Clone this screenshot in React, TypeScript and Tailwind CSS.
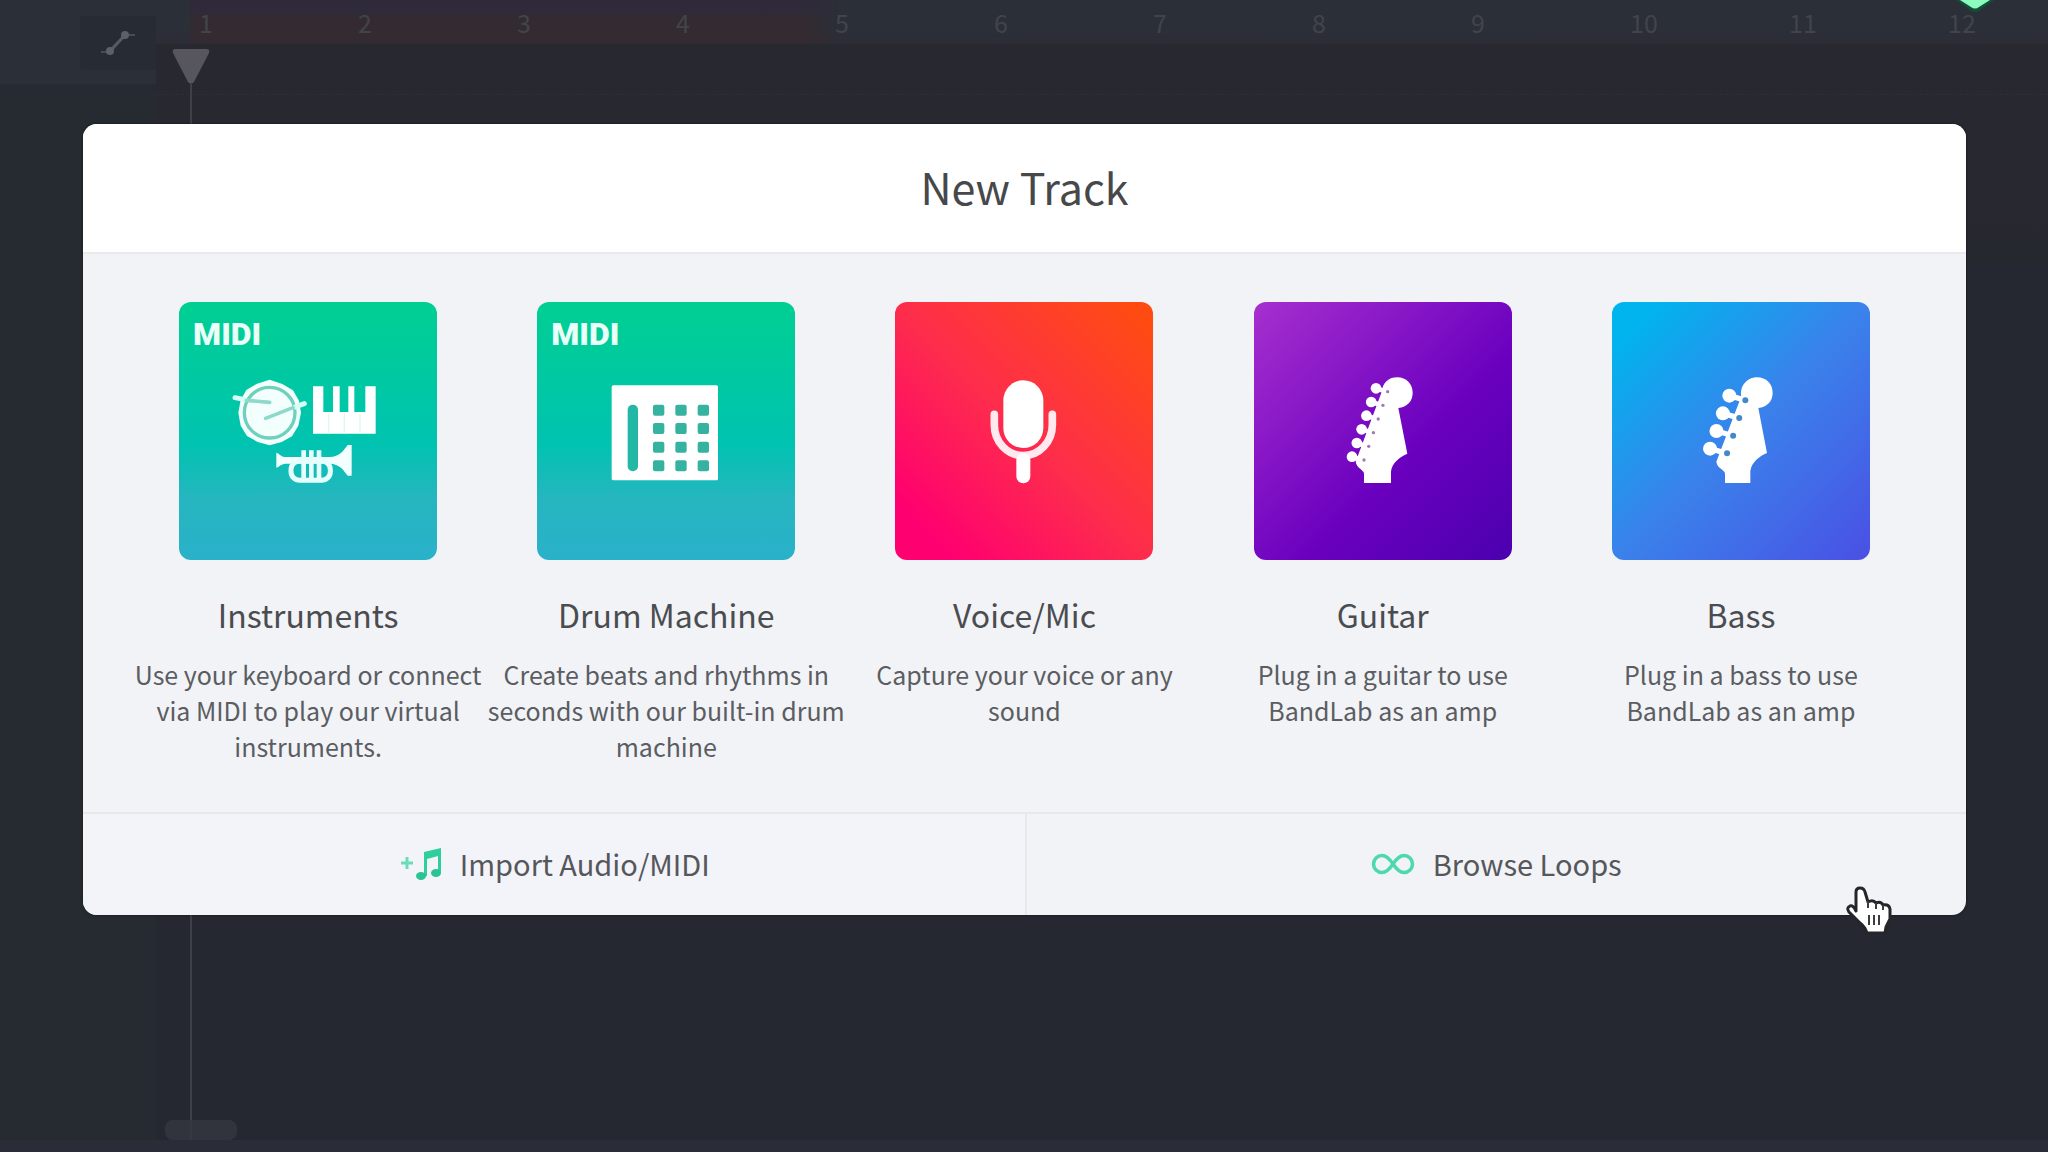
import type { ReactNode } from "react";

function InstrumentsIcon() {
  return (
    <svg viewBox="30 35 774 774" className="size-full" aria-hidden="true">
      <polygon
        points="302,268 340,281 372,300 390,331 396,367 388,406 369,438 338,455 302,465 266,455 234,437 215,406 208,367 215,329 232,299 264,280"
        fill="#f2fffc"
      />
      <circle cx="302" cy="367" r="76" fill="none" stroke="#6fd0bd" strokeWidth="10" />
      <g strokeLinecap="round" fill="none">
        <path d="M198 322l30 6M378 350l28-10" stroke="#d8fff6" strokeWidth="15" />
        <path d="M232 330l70 6M372 352l-82 32" stroke="#8fd9ca" strokeWidth="11" />
      </g>
      <path d="M432 288h31v77h29v-77h20v77h26v-77h18v77h33v-77h31v142H432z" fill="#fff" />
      <path d="M479 370v60M526 370v60M573 370v60" stroke="#d9f7f3" strokeWidth="4" />
      <path d="M322 487c6 0 14 13 28 13h132c30 0 42-20 54-36h12v92h-12c-12-16-24-36-54-36H350c-14 0-22 12-28 12z" fill="#f2fffe" />
      <rect x="366" y="512" width="118" height="58" rx="26" fill="none" stroke="#e6fffd" strokeWidth="15" />
      <path d="M404 480v88M427 480v88M450 480v88" stroke="#e6fffd" strokeWidth="14" />
    </svg>
  );
}

function DrumMachineIcon() {
  const xs = [373, 440, 507];
  const ys = [343, 398, 454, 510];
  return (
    <svg viewBox="25 35 774 774" className="size-full" aria-hidden="true">
      <rect x="249" y="285" width="319" height="285" rx="5" fill="#fff" />
      <rect x="297" y="343" width="31" height="200" rx="15" fill="#22b8a5" />
      {ys.map((y) => xs.map((x) => <rect key={`${x}-${y}`} x={x} y={y} width="34" height="33" rx="6" fill="#35b2a0" />))}
    </svg>
  );
}

function MicIcon() {
  return (
    <svg viewBox="45 35 774 774" className="size-full" aria-hidden="true">
      <rect x="370" y="270" width="120" height="203" rx="60" fill="#fff" />
      <path d="M343 372v32a87 92 0 0 0 174 0v-32" fill="none" stroke="#ffe9ee" strokeWidth="23" strokeLinecap="round" />
      <path d="M430 510v48" stroke="#fff" strokeWidth="42" strokeLinecap="round" />
    </svg>
  );
}

function GuitarIcon() {
  const pegs = [0, 1, 2, 3, 4, 5];
  return (
    <svg viewBox="42 35 774 774" className="size-full" aria-hidden="true">
      <path d="M472 261c27 0 46 20 46 46s-17 43-43 46l27 137c-20 8-47 27-49 54v34h-81v-28c0-12-22-16-25-36l78-209c3-25 18-44 47-44z" fill="#fff" />
      {pegs.map((i) => (
        <g key={i}>
          <path d={`M${408 - i * 14.4} ${294 + i * 41}l32 10`} stroke="#fff" strokeWidth="14" />
          <circle cx={408 - i * 14.4} cy={294 + i * 41} r="16" fill="#fff" />
          <circle cx={443 - i * 14.2} cy={304 + i * 41} r="5" fill="#9b7bb8" />
        </g>
      ))}
    </svg>
  );
}

function BassIcon() {
  const pegs = [0, 1, 2, 3];
  return (
    <svg viewBox="30 35 774 774" className="size-full" aria-hidden="true">
      <path d="M465 261c28 0 47 20 47 46s-17 43-43 46l26 135c-22 9-46 27-50 54v36h-76v-28c0-12-24-16-26-36l75-196c-6-31 18-57 47-57z" fill="#fff" />
      {pegs.map((i) => (
        <g key={i}>
          <path d={`M${382 - i * 19.3} ${316 + i * 53}l42 12`} stroke="#fff" strokeWidth="16" />
          <circle cx={382 - i * 19.3} cy={316 + i * 53} r="21" fill="#fff" />
          <circle cx={430 - i * 18.3} cy={330 + i * 53} r="9" fill="#4389c9" />
        </g>
      ))}
    </svg>
  );
}

type Track = { name: string; text: string; tile: string; midi?: boolean; icon: ReactNode };

const tracks: Track[] = [
  {
    name: "Instruments",
    text: "Use your keyboard or connect via MIDI to play our virtual instruments.",
    tile: "bg-[linear-gradient(180deg,#00cf92_0%,#00c3b0_55%,#25b6bf_76%,#2ab1ca_100%)]",
    midi: true,
    icon: <InstrumentsIcon />,
  },
  {
    name: "Drum Machine",
    text: "Create beats and rhythms in seconds with our built-in drum machine",
    tile: "bg-[linear-gradient(180deg,#00cf92_0%,#00c3b0_55%,#25b6bf_76%,#2ab1ca_100%)]",
    midi: true,
    icon: <DrumMachineIcon />,
  },
  {
    name: "Voice/Mic",
    text: "Capture your voice or any sound",
    tile: "bg-[linear-gradient(45deg,#ff0070_12%,#fd2d4b_50%,#ff4b12_95%)]",
    icon: <MicIcon />,
  },
  {
    name: "Guitar",
    text: "Plug in a guitar to use\nBandLab as an amp",
    tile: "bg-[linear-gradient(135deg,#a62fce_0%,#6a00bf_60%,#4b00ae_100%)]",
    icon: <GuitarIcon />,
  },
  {
    name: "Bass",
    text: "Plug in a bass to use\nBandLab as an amp",
    tile: "bg-[linear-gradient(135deg,#00b4ee_8%,#3a82eb_50%,#4a50e4_100%)]",
    icon: <BassIcon />,
  },
];

function TrackCard({ track }: { track: Track }) {
  return (
    <button type="button" className="flex cursor-pointer flex-col items-center text-center">
      <span className={`relative size-[258px] overflow-hidden rounded-xl ${track.tile}`}>
        {track.midi && (
          <span className="absolute top-4 left-[14px] font-['Roboto'] text-[32px] leading-8 font-black text-[#e9fff8]">MIDI</span>
        )}
        {track.icon}
      </span>
      <span className="mt-8 text-[32px] leading-[44px] text-[#4a4c50]">{track.name}</span>
      <span className="mt-5 text-[25px] leading-9 whitespace-pre-line text-[#5b5d62]">{track.text}</span>
    </button>
  );
}

function Timeline() {
  const bars = ["1", "2", "3", "4", "5", "6", "7", "8", "9", "10", "11", "12"];
  return (
    <div className="flex min-h-screen flex-col bg-[#252830]">
      <div className="flex flex-1">
        <div className="flex w-[156px] shrink-0 flex-col bg-[#262b32]">
          <div className="flex h-[84px] justify-end bg-[#2a2f38] pt-4">
            <button type="button" aria-label="Automation" className="flex h-[54px] w-[76px] items-center justify-center rounded bg-[#272b33]">
              <svg viewBox="0 0 36 28" className="h-7 w-9" aria-hidden="true">
                <path d="M1 23h9L25 6h10" fill="none" stroke="#484c53" strokeWidth="2" />
                <path d="M10 22L25 6" fill="none" stroke="#565a61" strokeWidth="3" />
                <circle cx="10" cy="22" r="4" fill="#5d6067" />
                <circle cx="25" cy="6" r="4" fill="#5d6067" />
              </svg>
            </button>
          </div>
        </div>
        <div className="relative flex flex-1 flex-col">
          <div className="flex h-[44px] bg-[linear-gradient(180deg,#2b2f38_70%,#2d2c35_100%)] pl-[34px]">
            <div className="relative flex w-full">
              <div className="absolute inset-y-0 left-0 w-[35%] bg-[linear-gradient(180deg,#2f2a39_0%,#2f2a39_25%,#332b31_45%,#332b31_100%)] mask-r-from-95%" />
              <ol className="relative -mr-[50px] grid flex-1 grid-cols-12 text-[25px] leading-[44px] text-[#42444a]">
                {bars.map((b) => (
                  <li key={b} className="pl-[9px]">{b}</li>
                ))}
              </ol>
            </div>
          </div>
          <div className="flex h-[220px] flex-col bg-[linear-gradient(180deg,#282831_70%,#25282f_100%)] pt-[50px]">
            <div className="border-t border-dashed border-[#2e2f33]" />
          </div>
          <div className="absolute top-[48px] bottom-0 left-4 flex w-[38px] flex-col items-center">
            <svg viewBox="0 0 38 36" className="h-9 w-[38px] shrink-0" aria-hidden="true">
              <path d="M3 1h32q3 0 2 4L22 34q-3 3-6 0L1 5Q0 1 3 1z" fill="#57565f" />
            </svg>
            <div className="w-0.5 flex-1 bg-[#3d4047]" />
          </div>
          <div className="absolute bottom-0 left-[9px] h-5 w-[72px] rounded-lg bg-[#343741]/80" />
        </div>
      </div>
      <div className="h-3 bg-[#2a2d37]" />
    </div>
  );
}

export default function App() {
  return (
    <div className="relative min-h-screen overflow-hidden font-['Noto_Sans_CJK_SC',sans-serif]">
      <Timeline />
      <svg viewBox="0 0 44 14" className="absolute top-0 right-[51px] h-[14px] w-11" aria-hidden="true">
        <path d="M3 0L17 10q5 4 10 0L41 0z" fill="#0f5138" />
        <path d="M7 0l11 7q4 3 8 0L37 0z" fill="#8dfbbd" />
      </svg>
      <div className="absolute inset-x-0 top-0 pt-[124px] pr-[82px] pl-[83px]">
        <section role="dialog" aria-labelledby="new-track" className="overflow-hidden rounded-[14px] bg-[#f1f3f6] shadow-[0_0_3px_rgba(0,0,0,0.5)]">
          <h1 id="new-track" className="border-b-2 border-[#e8eaec] bg-white pt-8 pb-9 text-center text-[43px] leading-[60px] text-[#46484a]">
            New Track
          </h1>
          <div className="grid grid-cols-5 px-[46px] pt-12 pb-12">
            {tracks.map((t) => (
              <TrackCard key={t.name} track={t} />
            ))}
          </div>
          <div className="grid h-[103px] grid-cols-2 border-t-2 border-[#e6e8ec] text-[29px] text-[#55575b]">
            <button type="button" className="flex cursor-pointer items-center justify-center gap-[18px] bg-[#f3f4f9] pb-0.5">
              <svg viewBox="0 0 44 32" className="h-8 w-11" aria-hidden="true">
                <path d="M3 15h12M9 9v12" stroke="#6bdcb4" strokeWidth="3" />
                <path d="M26 28V4l17-4v25h-3V8l-11 3v17z" fill="#2fcf9c" />
                <ellipse cx="23" cy="28" rx="5" ry="4" fill="#2bc294" />
                <ellipse cx="38" cy="25" rx="5" ry="4" fill="#2bc294" />
              </svg>
              Import Audio/MIDI
            </button>
            <button type="button" className="flex cursor-pointer items-center justify-center gap-[18px] border-l-2 border-[#e6e8ec] pb-0.5">
              <svg viewBox="0 0 44 22" className="h-[22px] w-11" aria-hidden="true">
                <path d="M22 11C18 5 15 2.500 11 2.500a8.500 8.500 0 0 0 0 17c4 0 7-2.500 11-8.500s7-8.500 11-8.500a8.500 8.500 0 0 1 0 17c-4 0-7-2.500-11-8.500z" fill="none" stroke="#4cd9ac" strokeWidth="3.500" />
              </svg>
              Browse Loops
            </button>
          </div>
        </section>
      </div>
      <svg viewBox="0 0 48 50" className="absolute top-[886px] right-[155px] h-[50px] w-12" aria-hidden="true">
        <path
          d="M11 25V6q0-4 4-4t5 4l3 10q5-3 8 1 5-2 7 2 6-1 7 4v10q-2 4-4 8l-1 6H22q-2-6-7-10L4 26q-3-4 1-6 3-1 6 5z"
          fill="#fff"
          stroke="#25262a"
          strokeWidth="3"
          strokeLinejoin="round"
        />
        <path d="M23 15v7M31 17v6M38 19v5M24 29v10M29 29v10M34 29v10" stroke="#3b3c40" strokeWidth="2" fill="none" />
      </svg>
    </div>
  );
}
